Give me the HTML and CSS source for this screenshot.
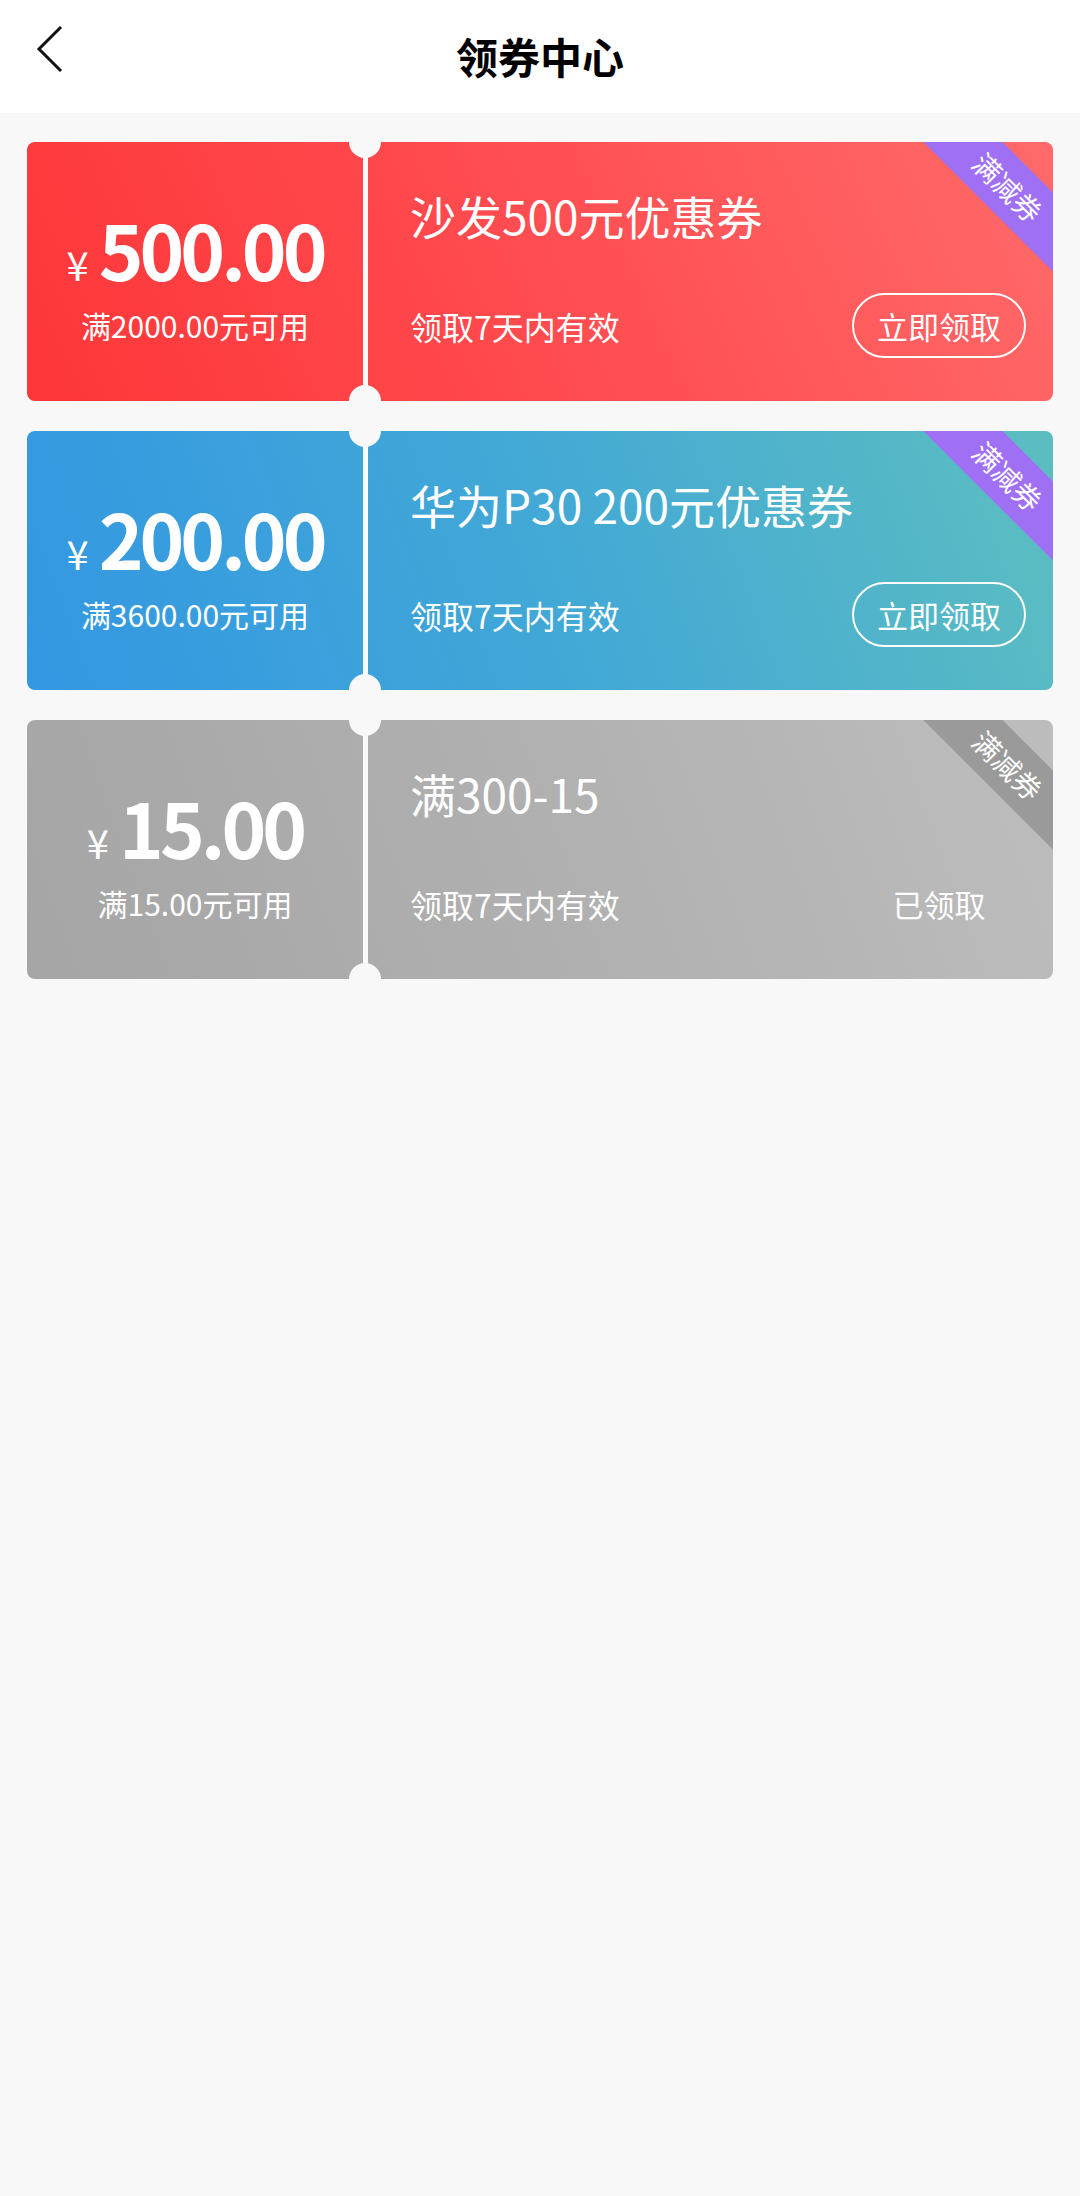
FILE: index.html
```html
<!DOCTYPE html>
<html lang="zh-CN">
<head>
<meta charset="utf-8">
<title>领券中心</title>
<link rel="stylesheet" href="styles.css">
</head>
<body>
<header class="topbar">
  <svg class="back" viewBox="0 0 30 48" width="30" height="48"><path d="M26 2 L4 24 L26 46" fill="none" stroke="#111" stroke-width="3" stroke-linejoin="miter"/></svg>
  <h1 class="title">领券中心</h1>
</header>
<main class="list">
  <div class="coupon coupon-red">
    <div class="c-left">
      <div class="amount"><span class="yen">¥</span><span class="num">500.00</span></div>
      <div class="cond">满2000.00元可用</div>
    </div>
    <div class="c-sep"></div>
    <div class="c-right">
      <div class="c-title">沙发500元优惠券</div>
      <div class="c-row">
        <span class="valid">领取7天内有效</span>
        <span class="btn">立即领取</span>
      </div>
      <div class="ribbon">满减券</div>
    </div>
    <span class="notch notch-top"></span>
    <span class="notch notch-bottom"></span>
  </div>
  <div class="coupon coupon-blue">
    <div class="c-left">
      <div class="amount"><span class="yen">¥</span><span class="num">200.00</span></div>
      <div class="cond">满3600.00元可用</div>
    </div>
    <div class="c-sep"></div>
    <div class="c-right">
      <div class="c-title">华为P30 200元优惠券</div>
      <div class="c-row">
        <span class="valid">领取7天内有效</span>
        <span class="btn">立即领取</span>
      </div>
      <div class="ribbon">满减券</div>
    </div>
    <span class="notch notch-top"></span>
    <span class="notch notch-bottom"></span>
  </div>
  <div class="coupon coupon-grey">
    <div class="c-left">
      <div class="amount"><span class="yen">¥</span><span class="num">15.00</span></div>
      <div class="cond">满15.00元可用</div>
    </div>
    <div class="c-sep"></div>
    <div class="c-right">
      <div class="c-title">满300-15</div>
      <div class="c-row">
        <span class="valid">领取7天内有效</span>
        <span class="btn btn-done">已领取</span>
      </div>
      <div class="ribbon ribbon-grey">满减券</div>
    </div>
    <span class="notch notch-top"></span>
    <span class="notch notch-bottom"></span>
  </div>
</main>
</body>
</html>
```
FILE: styles.css
```css
* { box-sizing: border-box; }
html, body {
  margin: 0;
  padding: 0;
  background: #f8f8f8;
  font-family: "Noto Sans CJK SC", "Noto Sans", sans-serif;
  color: #fff;
}
body { min-height: 2196px; }

.topbar {
  height: 113px;
  background: #fff;
  display: flex;
  align-items: center;
  justify-content: center;
  position: relative;
}
.back {
  position: absolute;
  left: 35px;
  top: 25px;
}
.title {
  margin: 0;
  font-size: 42px;
  font-weight: 700;
  color: #000;
  line-height: 1;
  margin-top: -2px;
}

.list {
  padding: 29px 27px 0;
  display: flex;
  flex-direction: column;
  gap: 30px;
}

.coupon {
  position: relative;
  height: 259px;
  display: flex;
  border-radius: 8px;
  overflow: hidden;
}
.coupon-red { background: linear-gradient(65deg, #fd3638 0%, #ff4a4e 45%, #ff6a6a 100%); }
.coupon-blue { background: linear-gradient(70deg, #3397e2 0%, #42a8d6 50%, #5dbec0 100%); }
.coupon-grey { background: linear-gradient(70deg, #a5a5a5 0%, #b0b0b0 50%, #bdbdbd 100%); }

.c-left {
  width: 336px;
  flex: none;
  padding-top: 66px;
  text-align: center;
}
.amount {
  height: 80px;
  line-height: 80px;
  white-space: nowrap;
}
.yen {
  font-size: 40px;
  margin-right: 10px;
}
.num {
  font-size: 76px;
  font-weight: 700;
  letter-spacing: -4px;
}
.cond {
  margin-top: 18px;
  font-size: 30px;
  line-height: 38px;
}

.c-sep {
  width: 5px;
  flex: none;
  background: #fafafa;
}

.c-right {
  flex: 1;
  position: relative;
  overflow: hidden;
  padding: 46px 27px 0 42px;
}
.c-title {
  font-size: 46px;
  line-height: 54px;
  white-space: nowrap;
}
.c-row {
  margin-top: 51px;
  display: flex;
  align-items: center;
  justify-content: space-between;
}
.valid {
  font-size: 32px;
  line-height: 40px;
}
.btn {
  min-width: 174px;
  height: 65px;
  line-height: 61px;
  padding: 0 20px;
  border: 2px solid #fff;
  border-radius: 33px;
  font-size: 31px;
  text-align: center;
}
.btn-done { border-color: transparent; }

.ribbon {
  position: absolute;
  top: 17px;
  right: -75px;
  width: 240px;
  height: 56px;
  line-height: 56px;
  text-align: center;
  font-size: 28px;
  background: #a070f4;
  transform: rotate(45deg);
}
.ribbon-grey { background: #9a9a9a; }

.notch {
  position: absolute;
  left: 322px;
  width: 32px;
  height: 32px;
  border-radius: 50%;
  background: #f8f8f8;
}
.notch-top { top: -16px; }
.notch-bottom { bottom: -16px; }
```
